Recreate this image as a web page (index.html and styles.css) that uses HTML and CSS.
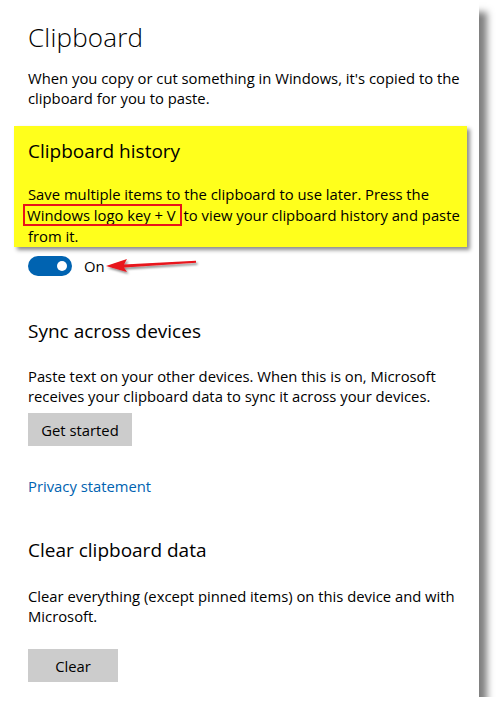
FILE: index.html
```html
<!DOCTYPE html>
<html>
<head>
<meta charset="utf-8">
<link rel="stylesheet" href="styles.css">
</head>
<body>
<div class="panel">
  <h1 class="title">Clipboard</h1>
  <p class="text intro">When you copy or cut something in Windows, it's copied to the clipboard for you to paste.</p>

  <section class="highlight">
    <h2 class="heading">Clipboard history</h2>
    <p class="text hl-text">Save multiple items to the clipboard to use later. Press the <span class="boxed">Windows logo key + V</span> to view your clipboard history and paste from it.</p>
  </section>

  <div class="toggle-row">
    <span class="toggle"><span class="knob"></span></span>
    <span class="toggle-label">On</span>
    <svg class="arrow" width="110" height="24" viewBox="0 0 110 24">
      <defs>
        <filter id="sh" x="-20%" y="-50%" width="140%" height="200%">
          <feDropShadow dx="1.5" dy="2" stdDeviation="1.2" flood-color="#000" flood-opacity="0.45"/>
        </filter>
      </defs>
      <g filter="url(#sh)">
        <path d="M3 12 L24 5 L21 10.5 L93 6.8 L93 8.8 L21 13.5 L24 18 Z" fill="#e8131b"/>
      </g>
    </svg>
  </div>

  <h2 class="heading sync-head">Sync across devices</h2>
  <p class="text sync-text">Paste text on your other devices. When this is on, Microsoft receives your clipboard data to sync it across your devices.</p>
  <button class="btn btn-start">Get started</button>
  <a class="link" href="#">Privacy statement</a>

  <h2 class="heading clear-head">Clear clipboard data</h2>
  <p class="text clear-text">Clear everything (except pinned items) on this device and with Microsoft.</p>
  <button class="btn btn-clear">Clear</button>
</div>
</body>
</html>
```

FILE: styles.css
```css
html, body {
  margin: 0;
  padding: 0;
  background: #ffffff;
}
body {
  font-family: "Open Sans", "Noto Sans", sans-serif;
  color: #000;
}
.panel {
  width: 479px;
  height: 697px;
  box-sizing: border-box;
  background: #fff;
  padding: 19px 12px 0 28px;
  box-shadow: 10px 10px 7px -2px rgba(0,0,0,0.5);
  display: flex;
  flex-direction: column;
  align-items: flex-start;
}
.title {
  font-size: 26px;
  font-weight: 300;
  margin: 0;
  line-height: 36px;
  letter-spacing: 0.2px;
}
.text {
  font-size: 14.8px;
  line-height: 20px;
  margin: 0;
}
.intro {
  margin-top: 13px;
}
.highlight {
  margin: 18px 0 0 -14px;
  padding: 10px 4px 0 14px;
  height: 121px;
  box-sizing: border-box;
  background: #ffff1c;
  align-self: stretch;
  box-shadow: 3px 3px 4px rgba(0,0,0,0.45);
}
.heading {
  font-size: 19px;
  font-weight: 400;
  margin: 0;
  line-height: 30px;
}
.hl-text {
  margin-top: 18px;
  line-height: 21px;
}
.boxed {
  display: inline-block;
  line-height: 18px;
  outline: 2px solid #e8131b;
  outline-offset: 0;
  padding: 0 4px 0 2px;
  margin-left: -3px;
}
.toggle-row {
  display: flex;
  align-items: center;
  margin-top: 9px;
  position: relative;
  height: 20px;
}
.toggle {
  width: 44px;
  height: 20px;
  border-radius: 10px;
  background: #0063b1;
  position: relative;
  display: inline-block;
}
.knob {
  position: absolute;
  right: 5px;
  top: 5px;
  width: 10px;
  height: 10px;
  border-radius: 50%;
  background: #fff;
}
.toggle-label {
  font-size: 14.8px;
  margin-left: 12px;
}
.arrow {
  position: absolute;
  left: 75px;
  top: -2px;
}
.sync-head {
  margin-top: 40px;
}
.sync-text {
  margin-top: 20px;
}
.btn {
  font-family: inherit;
  font-size: 14.8px;
  background: #cccccc;
  border: none;
  height: 33px;
  padding: 0;
  color: #000;
  margin-top: 7px;
}
.btn-start {
  width: 104px;
}
.link {
  color: #0063b1;
  text-decoration: none;
  font-size: 14.8px;
  margin-top: 30px;
  line-height: 20px;
}
.clear-head {
  margin-top: 39px;
}
.clear-text {
  margin-top: 21px;
}
.btn-clear {
  width: 90px;
  margin-top: 23px;
}
```
